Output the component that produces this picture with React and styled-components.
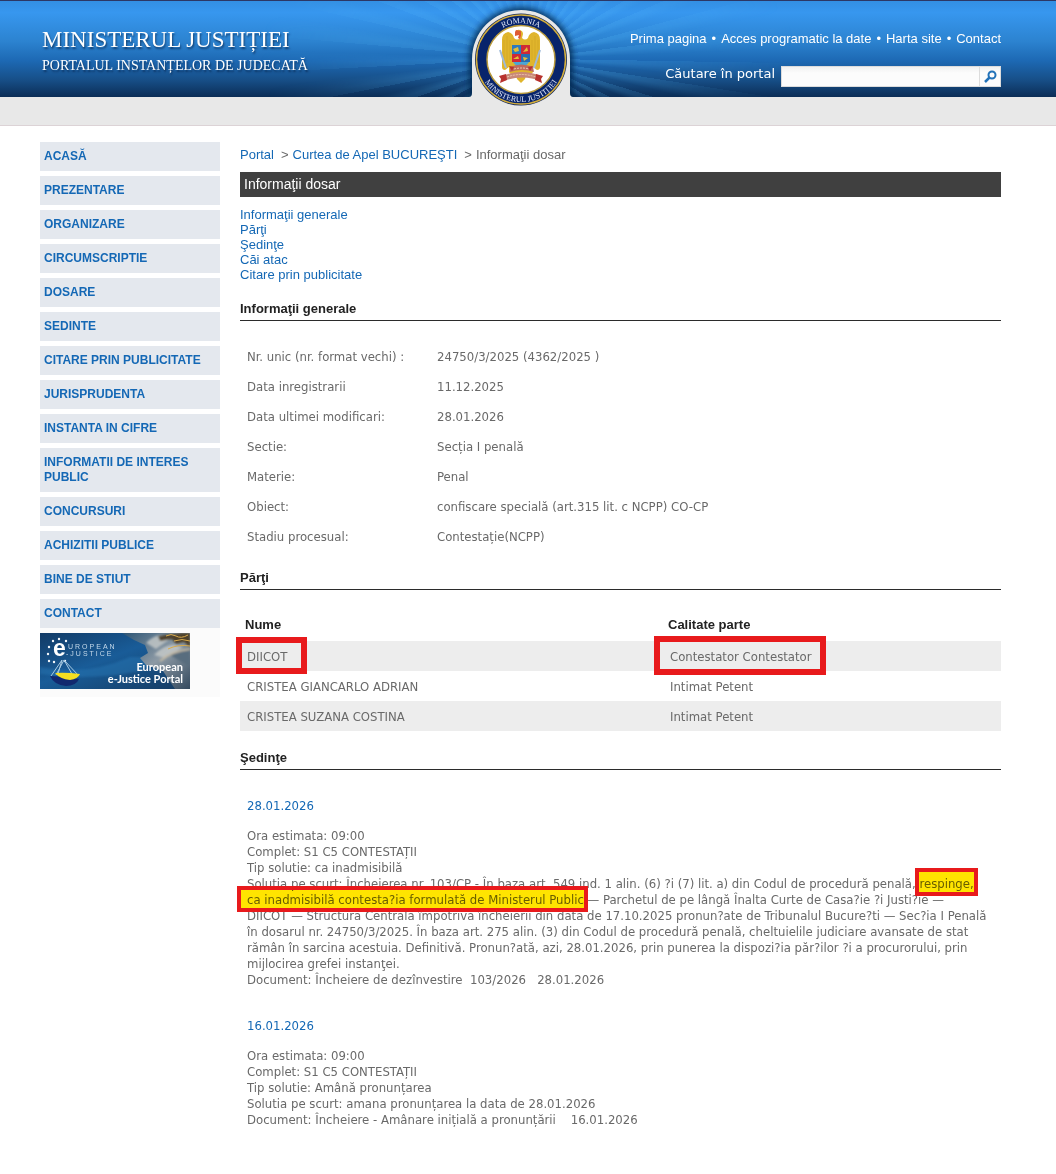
import React from "react"
import styled, { createGlobalStyle } from "styled-components"

const menu = [
    'ACASĂ', 'PREZENTARE', 'ORGANIZARE', 'CIRCUMSCRIPTIE', 'DOSARE', 'SEDINTE',
    'CITARE PRIN PUBLICITATE', 'JURISPRUDENTA', 'INSTANTA IN CIFRE',
    'INFORMATII DE INTERES PUBLIC', 'CONCURSURI', 'ACHIZITII PUBLICE',
    'BINE DE STIUT', 'CONTACT',
]

const topLinks = ['Prima pagina', 'Acces programatic la date', 'Harta site', 'Contact']

const anchors = [
    ['generale', 'Informaţii generale'],
    ['parti', 'Părţi'],
    ['sedinte', 'Şedinţe'],
    ['cai', 'Căi atac'],
    ['citare', 'Citare prin publicitate'],
]

const details = [
    ['Nr. unic (nr. format vechi) :', '24750/3/2025 (4362/2025 )'],
    ['Data inregistrarii', '11.12.2025'],
    ['Data ultimei modificari:', '28.01.2026'],
    ['Sectie:', 'Secția I penală'],
    ['Materie:', 'Penal'],
    ['Obiect:', 'confiscare specială (art.315 lit. c NCPP) CO-CP'],
    ['Stadiu procesual:', 'Contestație(NCPP)'],
]

const parties = [
    { name: 'DIICOT', role: 'Contestator Contestator', boxed: true },
    { name: 'CRISTEA GIANCARLO ADRIAN', role: 'Intimat Petent' },
    { name: 'CRISTEA SUZANA COSTINA', role: 'Intimat Petent' },
]

const Emblem = () => (
    <EmblemSvg viewBox="0 0 120 108" role="img" aria-label="Ministerul Justiției">
        <defs>
            <path id="arcTop" d="M23.500 59.500a36.500 36.500 0 0 1 73 0" />
            <path id="arcBottom" d="M17.500 59.500a42.500 42.500 0 0 0 85 0" />
            <filter id="glow" x="-20%" y="-20%" width="140%" height="140%">
                <feGaussianBlur stdDeviation="3" />
            </filter>
            <clipPath id="aboveBar"><path d="M0 0h120v97H0z" /></clipPath>
        </defs>
        <g clipPath="url(#aboveBar)">
            <path d="M8 100V59a52 52 0 0 1 104 0v41z" fill="#05264d" opacity=".85" filter="url(#glow)" />
            <path d="M8 97q3 0 3-4V59a49 49 0 0 1 98 0v34q0 4 3 4z" fill="#e8e8e8" />
        </g>
        <circle cx="60" cy="59.500" r="46" fill="#12265a" />
        <circle cx="60" cy="59.500" r="44.500" fill="#08246b" stroke="#d3ae3c" strokeWidth="1.500" />
        <circle cx="60" cy="59.500" r="34" fill="#fff" stroke="#b99a3c" strokeWidth="1.500" />
        <SealText><textPath href="#arcTop" startOffset="50%" textAnchor="middle">ROMANIA</textPath></SealText>
        <SealText><textPath href="#arcBottom" startOffset="50%" textAnchor="middle">MINISTERUL JUSTIȚIEI</textPath></SealText>
        {/* eagle */}
        <path
            d="M55 32q1-3 4-2 3 1 3 4l-1 4q3 3 6 0 1-5 6-6 6 1 6 8v27q0 3-3 3l-4-3v5l-3 4-4-1-1 4-4 4-4-4-1-4-4 1-3-4v-5l-4 3q-3 0-3-3V40q0-7 6-8 5 1 6 6 3 3 6 0l1-3z"
            fill="#e0b52c"
        />
        <path d="M46 36v27M43 40v23M49 40v20M74 36v27M77 40v23M71 40v20" stroke="#c99c22" strokeWidth=".5" />
        <path d="M54 32l1-2 5 1v5l-1 3-2-1 1-3-4 1z" fill="#df5b32" />
        <path d="M39 50l6 18M79 50l-6 18" stroke="#9eb9d8" strokeWidth="2" />
        <path d="M51 45h9v9h-9z" fill="#2d79bd" />
        <path d="M60 45h9v9h-9z" fill="#cf2936" />
        <path d="M51 54h9v8h-9z" fill="#cf2936" />
        <path d="M60 54h9v8h-9z" fill="#286db0" />
        <path d="M52 62h16q-3 5-8 5t-8-5z" fill="#4aa7d4" />
        <path d="M52 49l5-2 1 4-4 1zM62 52l4-5 1 4zM52 59l5-3 1 3zM62 57l5 1-4 3z" fill="#e5bd37" />
        <path d="M49 67q11-5 23 0l1 5q-12-4-24 0z" fill="#bf6b5d" />
        <path d="M42 76q18-8 38 0v5q-18-7-38 0z" fill="#c88878" />
        <path d="M38 76l7-2 1 6-7 3 1-4zM82 76l-7-2-1 6 7 3-1-4zM48 66l5 1-2 4zM72 66l-5 1 2 4z" fill="#b8322e" />
        <path d="M46 77q14-5 29 0M53 69q8-2 15 0" stroke="#f0c9ae" strokeWidth="1" strokeDasharray="2 1" fill="none" />
    </EmblemSvg>
)

const stars = [[9, 14], [9, 28], [8, 21], [13, 8], [19, 6], [26, 8], [14, 29], [25, 28]]

const JusticeBanner = () => (
    <BannerSvg viewBox="0 0 150 56" role="img" aria-label="European e-Justice Portal">
        <defs>
            <linearGradient id="sea" x1="0" y1="0" x2="1" y2="1">
                <stop offset="0" stopColor="#123b66" />
                <stop offset=".45" stopColor="#195c98" />
                <stop offset="1" stopColor="#153a60" />
            </linearGradient>
            <linearGradient id="stone" x1="0" y1="0" x2="1" y2="1">
                <stop offset="0" stopColor="#2c5474" />
                <stop offset=".5" stopColor="#8d9aa5" />
                <stop offset="1" stopColor="#344a5e" />
            </linearGradient>
            <filter id="soften"><feGaussianBlur stdDeviation="1" /></filter>
        </defs>
        <path d="M0 0h150v56H0z" fill="url(#sea)" />
        <path d="M0 34q45 10 90-10l30 0-20 14q-50 10-100 3z" fill="#2876b3" opacity=".5" filter="url(#soften)" />
        <path d="M82 0h68v56h-15l-12-18-17-6-6-7 8-5-3-8-11-5z" fill="url(#stone)" />
        <g filter="url(#soften)">
            <path d="M106 10q8-8 16-8l8 4-14 10zM114 22q10-10 19-10l10 2-18 11z" fill="#c7cbc9" opacity=".8" />
            <path d="M118 3l24-3h8v14l-6-5-8 2-4-5-12 2z" fill="#4d4129" />
            <path d="M130 22l20-8v20z" fill="#596d7e" />
            <path d="M120 28q12-10 30-12" stroke="#c3b9a4" strokeWidth="2" fill="none" />
        </g>
        <path d="M126 3q5-3 10 0t12-1M134 8q8-3 16 0M128 16q10-5 22-3" stroke="#d8aa4b" fill="none" />
        {stars.map(([x, y]) => <circle key={x + '-' + y} cx={x} cy={y} r="1.200" fill="#f4f7fa" />)}
        <path d="M22 27L11 43M22 27l-4 14M24 27l-8 15M24 27l14 15M24 27l8 14" stroke="#a8cbe3" strokeWidth="1" fill="none" />
        <path d="M10 43q14 0 29 3-3 7-13 7-12-1-16-10z" fill="#12296f" />
        <path d="M15 40q10-1 25 1-2 5-10 6-10-1-15-7z" fill="#f4df20" />
        <BigE x="13" y="23">e</BigE>
        <Spaced x="28" y="16">UROPEAN</Spaced>
        <Spaced x="26" y="23">-JUSTICE</Spaced>
        <BannerText x="143" y="38">European</BannerText>
        <BannerText x="143" y="50">e-Justice Portal</BannerText>
    </BannerSvg>
)

const App = () => {
    return (
        <>
            <GlobalStyle />
            <Header>
                <HeaderInner>
                    <Brand>
                        <BrandTitle>MINISTERUL JUSTIȚIEI</BrandTitle>
                        <BrandSub>PORTALUL INSTANȚELOR DE JUDECATĂ</BrandSub>
                    </Brand>
                    <Emblem />
                    <Tools>
                        <TopNav>
                            {topLinks.map(link => <li key={link}><a href="#top">{link}</a></li>)}
                        </TopNav>
                        <Search onSubmit={(e) => e.preventDefault()}>
                            <label htmlFor="q">Căutare în portal</label>
                            <SearchBox>
                                <input id="q" type="text" />
                                <button type="submit" aria-label="Caută">
                                    <svg width="13" height="13" viewBox="0 0 13 13" fill="none" stroke="#2272b9" strokeWidth="2">
                                        <circle cx="8" cy="5" r="3.500" />
                                        <path d="M5.500 7.500L1 12" strokeWidth="2.500" />
                                    </svg>
                                </button>
                            </SearchBox>
                        </Search>
                    </Tools>
                </HeaderInner>
            </Header>
            <Bar />
            <Page>
                <Sidebar>
                    <Menu>
                        {menu.map(item => <li key={item}><MenuLink href="#top">{item}</MenuLink></li>)}
                    </Menu>
                    <BannerLink href="#ejustice"><JusticeBanner /></BannerLink>
                </Sidebar>
                <Content>
                    <Breadcrumb>
                        <a href="#top">Portal</a>
                        <span>&gt;</span>
                        <a href="#top">Curtea de Apel BUCUREŞTI</a>
                        <span>&gt;</span>
                        Informaţii dosar
                    </Breadcrumb>
                    <PageTitle>Informaţii dosar</PageTitle>
                    <Anchors>
                        {anchors.map(([id, label]) => <li key={id}><a href={'#' + id}>{label}</a></li>)}
                    </Anchors>

                    <SectionTitle id="generale">Informaţii generale</SectionTitle>
                    <Details>
                        <tbody>
                            {details.map(([label, value]) => (
                                <tr key={label}>
                                    <th scope="row">{label}</th>
                                    <td>{value}</td>
                                </tr>
                            ))}
                        </tbody>
                    </Details>

                    <SectionTitle id="parti">Părţi</SectionTitle>
                    <Parties>
                        <thead>
                            <tr>
                                <th scope="col">Nume</th>
                                <th scope="col">Calitate parte</th>
                            </tr>
                        </thead>
                        <tbody>
                            {parties.map(p => (
                                <tr key={p.name}>
                                    <td>{p.boxed ? <Boxed $inset="-12px -20px -10px -11px">{p.name}</Boxed> : p.name}</td>
                                    <td>{p.boxed ? <Boxed $inset="-13px -14px -11px -16px">{p.role}</Boxed> : p.role}</td>
                                </tr>
                            ))}
                        </tbody>
                    </Parties>

                    <SectionTitle id="sedinte">Şedinţe</SectionTitle>
                    <Hearing>
                        <HearingDate>28.01.2026</HearingDate>
                        <p>Ora estimata: 09:00</p>
                        <p>Complet: S1 C5 CONTESTAȚII</p>
                        <p>Tip solutie: ca inadmisibilă</p>
                        <p>
                            Solutia pe scurt: Încheierea nr. 103/CP - În baza art. 549 ind. 1 alin. (6) ?i (7) lit. a) din Codul de procedură penală, <Marked $inset="-8px -4px -5px -4px">respinge,</Marked>{' '}
                            <Marked $inset="-6px -4px -5px -10px">ca inadmisibilă contesta?ia formulată de Ministerul Public</Marked> — Parchetul de pe lângă Înalta Curte de Casa?ie ?i Justi?ie —<br />
                            DIICOT — Structura Centrala împotriva încheierii din data de 17.10.2025 pronun?ate de Tribunalul Bucure?ti — Sec?ia I Penală<br />
                            în dosarul nr. 24750/3/2025. În baza art. 275 alin. (3) din Codul de procedură penală, cheltuielile judiciare avansate de stat<br />
                            rămân în sarcina acestuia. Definitivă. Pronun?ată, azi, 28.01.2026, prin punerea la dispozi?ia păr?ilor ?i a procurorului, prin<br />
                            mijlocirea grefei instanţei.
                        </p>
                        <p>Document: Încheiere de dezînvestire&nbsp; 103/2026&nbsp;&nbsp; 28.01.2026</p>
                    </Hearing>
                    <Hearing>
                        <HearingDate>16.01.2026</HearingDate>
                        <p>Ora estimata: 09:00</p>
                        <p>Complet: S1 C5 CONTESTAȚII</p>
                        <p>Tip solutie: Amână pronunțarea</p>
                        <p>Solutia pe scurt: amana pronunțarea la data de 28.01.2026</p>
                        <p>Document: Încheiere - Amânare inițială a pronunțării&nbsp;&nbsp;&nbsp; 16.01.2026</p>
                    </Hearing>
                </Content>
            </Page>
        </>
    )
}

const GlobalStyle = createGlobalStyle`
* {
    box-sizing: border-box;
}
body {
    margin: 0;
    background: #fff;
    color: #696969;
    font-family: "Liberation Sans", Arial, sans-serif;
    font-size: 13px;
    line-height: 15px;
}
a {
    color: #1468b5;
    text-decoration: none;
}
ul, p, h1, h2, h3 {
    margin: 0;
    padding: 0;
    list-style: none;
}
table {
    border-collapse: collapse;
    width: 100%;
    table-layout: fixed;
}
`

const Header = styled.header`
    position: relative;
    height: 97px;
    padding: 0 55px 0 40px;
    border-top: 1px solid #2c3765;
    background: linear-gradient(#338fe3 0%, #3797ef 12%, #2c83d0 42%, #1d69b4 62%, #174f88 82%, #0b2d56 100%);

    &::before {
        content: "";
        position: absolute;
        inset: 0;
        background: repeating-conic-gradient(from 3deg at 50% 60%, rgba(95, 195, 255, 0.2) 0deg 2deg, transparent 5deg 8deg);
        mask-image: radial-gradient(ellipse 270px 150px at 50% 60%, #000 20%, transparent 100%);
    }
`

const HeaderInner = styled.div`
    position: relative;
    display: grid;
    grid-template-columns: 1fr 120px 1fr;
    height: 96px;
`

const Brand = styled.div`
    padding: 26px 0 0 2px;
    color: #fff;
    font-family: "Liberation Serif", serif;
    text-shadow: 1px 2px 2px rgba(0, 20, 50, 0.6);
    white-space: nowrap;
`

const BrandTitle = styled.h1`
    font-size: 23px;
    font-weight: 400;
    line-height: 26px;
`

const BrandSub = styled.p`
    padding-top: 4px;
    font-size: 14px;
    line-height: 18px;
`

const EmblemSvg = styled.svg`
    width: 120px;
    height: 108px;
    margin-top: -1px;
    z-index: 1;
`

const SealText = styled.text`
    fill: #dfe5f4;
    font-family: "Liberation Serif", serif;
    font-size: 8px;
`

const Tools = styled.div`
    display: flex;
    flex-direction: column;
    align-items: flex-end;
    padding-top: 30px;
    color: #fff;
    white-space: nowrap;
`

const TopNav = styled.ul`
    display: flex;

    a {
        color: #fff;
    }
    li + li::before {
        content: "•";
        padding: 0 5px;
    }
`

const Search = styled.form`
    display: flex;
    gap: 6px;
    padding-top: 20px;
    font-family: "DejaVu Sans", Verdana, sans-serif;
`

const SearchBox = styled.span`
    display: flex;
    width: 220px;
    height: 21px;
    border: 1px solid #dcdcdc;
    background: linear-gradient(#f1f1f1, #fcfcfc 6px);

    input {
        flex: 1;
        min-width: 0;
        border: 0;
        padding: 0 4px;
        background: none;
    }
    button {
        display: flex;
        align-items: center;
        justify-content: center;
        width: 21px;
        padding: 0;
        border: 0;
        border-left: 1px solid #dcdcdc;
        background: none;
    }
`

const Bar = styled.div`
    height: 29px;
    border-bottom: 1px solid #dcd3d6;
    background: #e8e8e8;
`

const Page = styled.div`
    display: grid;
    grid-template-columns: 180px 1fr;
    gap: 20px;
    padding: 16px 55px 40px 40px;
`

const Sidebar = styled.aside`
    min-width: 0;
`

const Menu = styled.ul`
    display: flex;
    flex-direction: column;
    gap: 5px;
`

const MenuLink = styled.a`
    display: block;
    padding: 7px 4px;
    background: #e4e8ee;
    font-size: 12px;
    font-weight: 700;
`

const BannerLink = styled.a`
    display: block;
    height: 69px;
    padding-top: 5px;
    background: #fbfbfb;
`

const BannerSvg = styled.svg`
    display: block;
    width: 150px;
    height: 56px;
`

const BannerText = styled.text`
    fill: #fff;
    font-family: Lato, sans-serif;
    font-size: 11px;
    font-weight: 700;
    text-anchor: end;
`

const Spaced = styled.text`
    fill: #c4d9ea;
    font-family: "Liberation Sans", sans-serif;
    font-size: 7px;
    letter-spacing: 2px;
`

const BigE = styled.text`
    fill: #fff;
    font-family: "Liberation Sans", sans-serif;
    font-size: 23px;
    font-weight: 700;
`

const Content = styled.main`
    min-width: 0;
`

const Breadcrumb = styled.nav`
    display: flex;
    padding: 5px 0 10px;

    span {
        padding: 0 4px 0 7px;
    }
`

const PageTitle = styled.h2`
    padding: 5px 4px;
    background: #404040;
    color: #fff;
    font-size: 14px;
    font-weight: 400;
`

const Anchors = styled.ul`
    padding: 10px 0 19px;
`

const SectionTitle = styled.h3`
    padding-bottom: 4px;
    border-bottom: 1px solid #2b2b2b;
    color: #222;
    font-size: 13px;
    font-weight: 700;
`

const Details = styled.table`
    margin: 20px 0 19px;
    font-family: "DejaVu Sans Condensed", Tahoma, sans-serif;
    font-size: 13px;

    th, td {
        height: 30px;
        padding: 0 7px;
        font-weight: 400;
        text-align: left;
    }
    th {
        width: 190px;
    }
`

const Parties = styled.table`
    margin: 20px 0 19px;
    font-family: "DejaVu Sans Condensed", Tahoma, sans-serif;
    font-size: 13px;

    th {
        width: 423px;
        height: 31px;
        padding: 0 5px 2px;
        color: #222;
        font-family: "Liberation Sans", Arial, sans-serif;
        text-align: left;
    }
    th + th {
        width: auto;
    }
    td {
        height: 30px;
        padding: 0 7px;
    }
    tbody tr:nth-child(odd) {
        background: #ededed;
    }
`

const Boxed = styled.span`
    position: relative;

    &::after {
        content: "";
        position: absolute;
        inset: ${props => props.$inset};
        border: 6px solid #e81a1c;
    }
`

const Hearing = styled.section`
    padding: 28px 0 0 7px;
    font-family: "DejaVu Sans Condensed", Tahoma, sans-serif;
    font-size: 13px;
    line-height: 16px;

    & + & {
        padding-top: 30px;
    }
`

const HearingDate = styled.h3`
    padding-bottom: 14px;
    color: #1468b5;
    font-size: 13px;
    font-weight: 400;
`

const Marked = styled.mark`
    position: relative;
    color: inherit;
    background: none;
    white-space: nowrap;

    &::before,
    &::after {
        content: "";
        position: absolute;
        inset: ${props => props.$inset};
    }
    &::before {
        background: #ffe400;
        mix-blend-mode: multiply;
    }
    &::after {
        border: 4px solid #e81a1c;
    }
`

export default App
